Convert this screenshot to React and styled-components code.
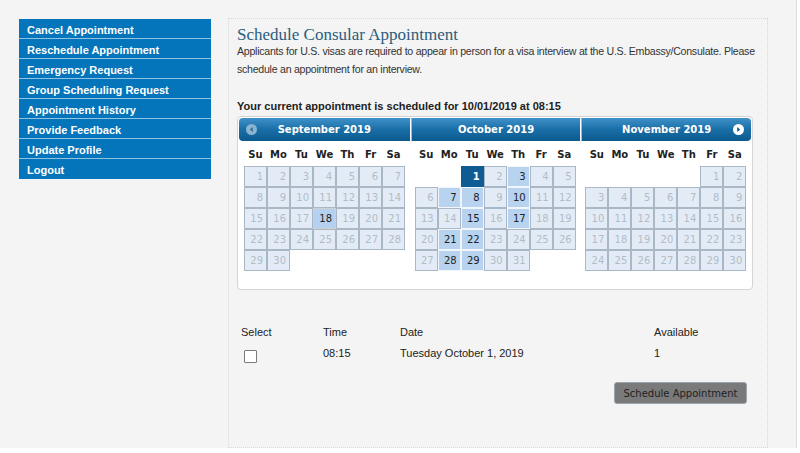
import React from "react";
import styled, { createGlobalStyle, css } from "styled-components";

const GlobalStyle = createGlobalStyle`
  html, body { margin: 0; padding: 0; background: #ffffff; }
  body { font-family: "Liberation Sans", Arial, sans-serif; }
  * { box-sizing: border-box; }
`;

const Page = styled.div`
  width: 797px;
  height: 448px;
  background: #f4f4f4;
  border-right: 1px solid #dcdcdc;
  display: flex;
  align-items: flex-start;
  padding: 19px 0 0 19px;
`;

const Sidebar = styled.nav`
  width: 192px;
  display: flex;
  flex-direction: column;
`;

const NavItem = styled.a`
  display: block;
  height: 20px;
  line-height: 22px;
  padding-left: 8px;
  background: #0474bb;
  border-bottom: 1px solid #8cc2e2;
  color: #ffffff;
  font-weight: bold;
  font-size: 11px;
  text-decoration: none;
  overflow: hidden;
  &:last-child { border-bottom: 1px solid #0474bb; }
`;

const Panel = styled.main`
  margin-left: 17px;
  margin-top: -1px;
  width: 540px;
  height: 430px;
  border: 1px dotted #d8d8d8;
  padding: 8px 5px 0 8px;
`;

const Title = styled.h1`
  margin: 0;
  font-family: "Liberation Serif", "DejaVu Serif", serif;
  font-weight: normal;
  font-size: 17px;
  line-height: 16px;
  color: #2b5d7e;
`;

const Intro = styled.p`
  margin: -1px 0 0 0;
  font-size: 10.6px;
  letter-spacing: -0.26px;
  line-height: 18px;
  color: #333;
`;

const Current = styled.p`
  margin: 21px 0 0 0;
  font-size: 11px;
  line-height: 14px;
  font-weight: bold;
  color: #222;
`;

const Picker = styled.div`
  margin-top: 3px;
  width: 516px;
  height: 174px;
  background: #fff;
  border: 1px solid #d4d4d4;
  border-radius: 4px;
  padding: 1px;
  display: flex;
  font-family: "DejaVu Sans", Verdana, sans-serif;
`;

const Group = styled.div`
  flex: 1;
  display: flex;
  flex-direction: column;
`;

const Header = styled.div`
  position: relative;
  height: 23px;
  background: linear-gradient(#3f92c8, #1a6ea7 50%, #0b5a8e);
  border-left: ${(p) => (p.$pos === "first" ? "none" : "1px solid #9bbfd9")};
  margin-left: ${(p) => (p.$pos === "first" ? "0" : "1px")};
  border-radius: ${(p) =>
    p.$pos === "first" ? "4px 0 0 4px" : p.$pos === "last" ? "0 4px 4px 0" : "0"};
  color: #fff;
  font-weight: bold;
  font-size: 10px;
  line-height: 23px;
  text-align: center;
`;

const Arrow = styled.span`
  position: absolute;
  top: 6px;
  ${(p) => (p.$side === "prev" ? "left: 7px;" : "right: 7px;")}
  width: 11px;
  height: 11px;
  display: flex;
  line-height: 0;
`;

const Names = styled.div`
  display: grid;
  grid-template-columns: repeat(7, 23px);
  margin-left: 5px;
  height: 25px;
  align-items: center;
  font-size: 10px;
  font-weight: bold;
  color: #222;
  text-align: center;
  padding-top: 1px;
`;

const Grid = styled.div`
  display: grid;
  grid-template-columns: repeat(7, 23px);
  grid-auto-rows: 21px;
  margin-left: 5px;
`;

const Day = styled.span`
  display: block;
  border: 1px solid transparent;
  font-size: 10px;
  line-height: 19px;
  text-align: right;
  padding-right: 3px;
  ${(p) =>
    p.$kind === "off" &&
    css`
      background: #e3ecf6;
      border-color: #a9b8c4;
      color: #b2bcc6;
    `}
  ${(p) =>
    p.$kind === "open" &&
    css`
      background: #b8d3f0;
      border-color: #f2f6fb;
      color: #222;
    `}
  ${(p) =>
    p.$kind === "sel" &&
    css`
      background: #0e5c92;
      border-color: #0e5c92;
      color: #fff;
      font-weight: bold;
    `}
  ${(p) =>
    p.$kind === "today" &&
    css`
      background: #b6d1ef;
      border-color: #d0d0d0;
      color: #222;
    `}
`;

const Slots = styled.div`
  margin: 35px 0 0 4px;
  display: grid;
  grid-template-columns: 82px 77px 254px auto;
  grid-auto-rows: 14px;
  row-gap: 7px;
  font-size: 11px;
  line-height: 14px;
  color: #222;
`;

const Box = styled.span`
  display: block;
  width: 13px;
  height: 13px;
  margin: 4px 0 0 3px;
  border: 1px solid #7a7a7a;
  border-radius: 1px;
  background: #fff;
`;

const Actions = styled.div`
  display: flex;
  justify-content: flex-end;
  margin: 22px 15px 0 0;
`;

const Button = styled.button`
  width: 133px;
  height: 22px;
  background: #7a7a7a;
  border: 1px solid #9aa4ad;
  border-radius: 3px;
  color: #222;
  font-family: "DejaVu Sans", Verdana, sans-serif;
  font-size: 10px;
  padding: 0;
`;

const PrevIcon = () => (
  <svg width="11" height="11" viewBox="0 0 11 11">
    <circle cx="5.5" cy="5.5" r="5.5" fill="#8db3d1" />
    <path d="M6.8 3 L3.8 5.5 L6.8 8 Z" fill="#2e6d9c" />
  </svg>
);

const NextIcon = () => (
  <svg width="11" height="11" viewBox="0 0 11 11">
    <circle cx="5.5" cy="5.5" r="5.5" fill="#ffffff" />
    <path d="M4.2 3 L7.2 5.5 L4.2 8 Z" fill="#0e5c92" />
  </svg>
);

const nav = [
  "Cancel Appointment",
  "Reschedule Appointment",
  "Emergency Request",
  "Group Scheduling Request",
  "Appointment History",
  "Provide Feedback",
  "Update Profile",
  "Logout",
];

const months = [
  { name: "September 2019", start: 0, days: 30, pos: "first", open: [], sel: null, today: 18 },
  { name: "October 2019", start: 2, days: 31, pos: "middle", open: [3, 7, 8, 10, 15, 17, 21, 22, 28, 29], sel: 1, today: null },
  { name: "November 2019", start: 5, days: 30, pos: "last", open: [], sel: null, today: null },
];

const dayNames = ["Su", "Mo", "Tu", "We", "Th", "Fr", "Sa"];

function Month({ m }) {
  const cells = [];
  for (let i = 0; i < m.start; i++) cells.push(<span key={"e" + i} />);
  for (let d = 1; d <= m.days; d++) {
    let kind = "off";
    if (m.sel === d) kind = "sel";
    else if (m.today === d) kind = "today";
    else if (m.open.includes(d)) kind = "open";
    cells.push(
      <Day key={d} $kind={kind}>
        {d}
      </Day>
    );
  }
  return (
    <Group>
      <Header $pos={m.pos}>
        {m.pos === "first" && (
          <Arrow $side="prev">
            <PrevIcon />
          </Arrow>
        )}
        {m.name}
        {m.pos === "last" && (
          <Arrow $side="next">
            <NextIcon />
          </Arrow>
        )}
      </Header>
      <Names>
        {dayNames.map((n) => (
          <span key={n}>{n}</span>
        ))}
      </Names>
      <Grid>{cells}</Grid>
    </Group>
  );
}

export default function App() {
  return (
    <>
      <GlobalStyle />
      <Page>
        <Sidebar>
          {nav.map((n) => (
            <NavItem key={n} href="#">
              {n}
            </NavItem>
          ))}
        </Sidebar>
        <Panel>
          <Title>Schedule Consular Appointment</Title>
          <Intro>
            Applicants for U.S. visas are required to appear in person for a visa interview at the
            U.S. Embassy/Consulate. Please schedule an appointment for an interview.
          </Intro>
          <Current>Your current appointment is scheduled for 10/01/2019 at 08:15</Current>
          <Picker>
            {months.map((m) => (
              <Month key={m.name} m={m} />
            ))}
          </Picker>
          <Slots>
            <span>Select</span>
            <span>Time</span>
            <span>Date</span>
            <span>Available</span>
            <span>
              <Box />
            </span>
            <span>08:15</span>
            <span>Tuesday October 1, 2019</span>
            <span>1</span>
          </Slots>
          <Actions>
            <Button>Schedule Appointment</Button>
          </Actions>
        </Panel>
      </Page>
    </>
  );
}
